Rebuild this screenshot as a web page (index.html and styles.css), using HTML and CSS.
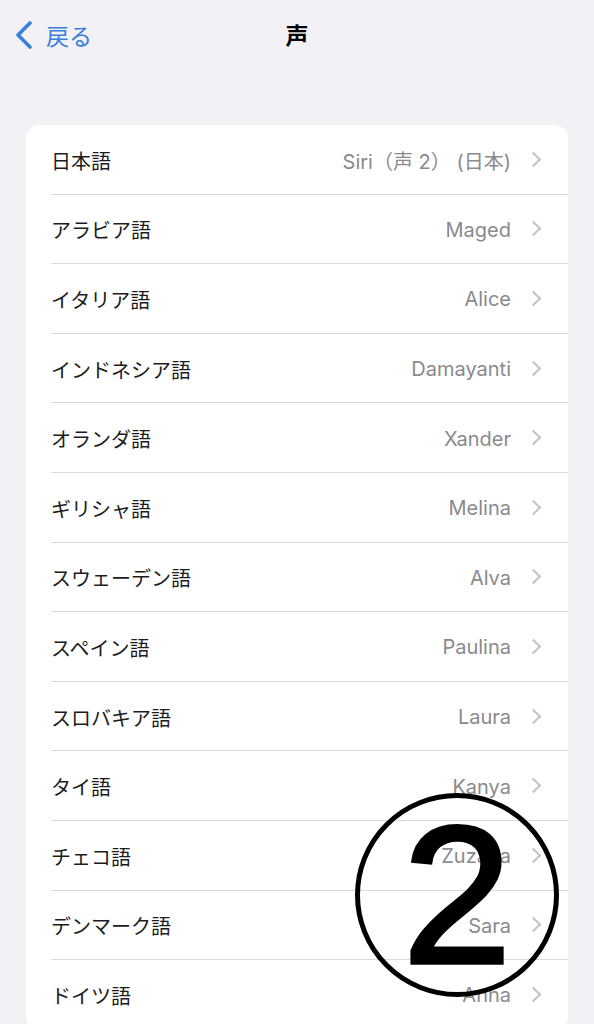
FILE: index.html
```html
<!DOCTYPE html>
<html lang="ja">
<head>
<meta charset="utf-8">
<link rel="stylesheet" href="styles.css">
</head>
<body>
<div class="screen">
  <header class="nav">
    <div class="back">
      <svg class="back-chev" width="19" height="28" viewBox="0 0 19 28"><path d="M16 2 L4 14 L16 26" fill="none" stroke="#3a7fd9" stroke-width="3.6" stroke-linecap="round" stroke-linejoin="round"/></svg>
      <span class="back-label">戻る</span>
    </div>
    <div class="title">声</div>
  </header>
  <ul class="list">
    <li class="row"><span class="label">日本語</span><span class="value">Siri（声 2） (日本)</span><span class="chev"></span></li>
    <li class="row"><span class="label">アラビア語</span><span class="value">Maged</span><span class="chev"></span></li>
    <li class="row"><span class="label">イタリア語</span><span class="value">Alice</span><span class="chev"></span></li>
    <li class="row"><span class="label">インドネシア語</span><span class="value">Damayanti</span><span class="chev"></span></li>
    <li class="row"><span class="label">オランダ語</span><span class="value">Xander</span><span class="chev"></span></li>
    <li class="row"><span class="label">ギリシャ語</span><span class="value">Melina</span><span class="chev"></span></li>
    <li class="row"><span class="label">スウェーデン語</span><span class="value">Alva</span><span class="chev"></span></li>
    <li class="row"><span class="label">スペイン語</span><span class="value">Paulina</span><span class="chev"></span></li>
    <li class="row"><span class="label">スロバキア語</span><span class="value">Laura</span><span class="chev"></span></li>
    <li class="row"><span class="label">タイ語</span><span class="value">Kanya</span><span class="chev"></span></li>
    <li class="row"><span class="label">チェコ語</span><span class="value">Zuzana</span><span class="chev"></span></li>
    <li class="row"><span class="label">デンマーク語</span><span class="value">Sara</span><span class="chev"></span></li>
    <li class="row"><span class="label">ドイツ語</span><span class="value">Anna</span><span class="chev"></span></li>
  </ul>
  <div class="badge"><span class="badge-num">2</span></div>
</div>
</body>
</html>
```

FILE: styles.css
```css
html, body {
  margin: 0;
  padding: 0;
  background: #f2f1f6;
}
.screen {
  position: relative;
  width: 594px;
  height: 1024px;
  overflow: hidden;
  font-family: "Noto Sans CJK JP", "Noto Sans", sans-serif;
}
.nav {
  position: relative;
  height: 70px;
  display: flex;
  align-items: center;
  justify-content: center;
}
.back {
  position: absolute;
  left: 14px;
  top: 21px;
  display: flex;
  align-items: center;
  gap: 13px;
}
.back-chev {
  display: block;
}
.back-label {
  color: #3a7fd9;
  font-size: 23px;
  line-height: 28px;
}
.title {
  font-size: 23px;
  font-weight: 700;
  color: #000;
  line-height: 28px;
  margin-top: -3px;
}
.list {
  list-style: none;
  margin: 55px 26px 0;
  padding: 0;
  background: #fff;
  border-radius: 13px;
  overflow: hidden;
}
.row {
  display: flex;
  align-items: center;
  height: 69.6px;
  box-sizing: border-box;
  margin-left: 25px;
  padding-right: 26px;
  border-bottom: 1px solid #d9d8dc;
}
.label {
  flex: 1;
  font-size: 20px;
  color: #1c1c1e;
  padding-top: 2px;
}
.value {
  font-family: "Inter", "Noto Sans CJK JP", sans-serif;
  font-size: 20px;
  color: #8a8a8e;
  margin-right: 17px;
  padding-top: 2px;
}
.chev {
  width: 9px;
  height: 9px;
  border-top: 2px solid #c4c4c8;
  border-right: 2px solid #c4c4c8;
  transform: rotate(45deg);
  margin-right: 3px;
}
.badge {
  position: absolute;
  left: 355px;
  top: 793px;
  width: 204px;
  height: 204px;
  box-sizing: border-box;
  border: 5px solid #000;
  border-radius: 50%;
  display: flex;
  align-items: center;
  justify-content: center;
}
.badge-num {
  font-family: "Liberation Sans", Arial, sans-serif;
  font-size: 197px;
  line-height: 1;
  color: #000;
  -webkit-text-stroke: 3.5px #000;
  margin-top: 0;
}
```
